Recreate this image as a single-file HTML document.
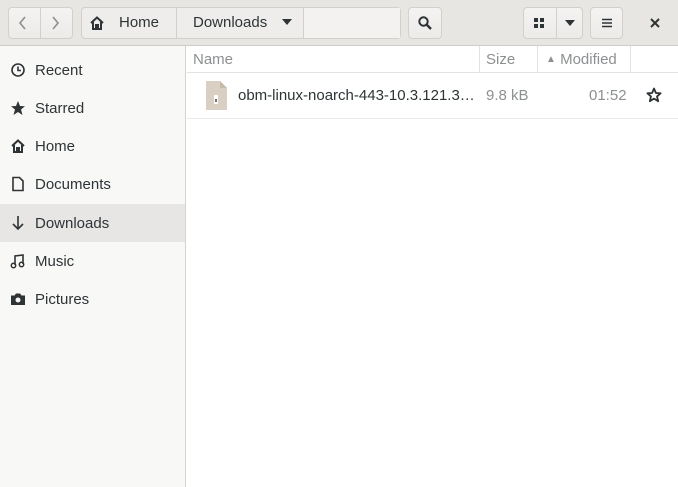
<!DOCTYPE html><html><head><style>
*{box-sizing:border-box;margin:0;padding:0}
body{width:678px;height:487px;overflow:hidden;font-family:"Liberation Sans","DejaVu Sans",sans-serif;font-size:15px;color:#2e3436;background:#fff;position:relative}
.hb{position:absolute;left:0;top:0;width:678px;height:46px;background:#e8e6e3;border-bottom:1px solid #cfcbc6}
.btn{position:absolute;top:7px;height:32px;background:linear-gradient(#f4f3f2,#ecebe9);border:1px solid #d3cfca;border-radius:4px;display:flex;align-items:center;justify-content:center;color:#2e3436}
.side{position:absolute;left:0;top:46px;width:186px;height:441px;background:#f8f8f7;border-right:1px solid #d6d3cf}
.it{position:absolute;left:0;width:185px;height:38px;display:flex;align-items:center;padding-left:10px}
.it svg{width:16px;height:16px;margin-right:9px}
.sel{background:#e7e6e5}
.t{position:absolute;white-space:nowrap}
</style></head><body>
<div class="hb"></div>
<div class="btn" style="left:8px;width:65px;border-radius:4px"></div>
<div class="t" style="left:40px;top:8px;width:1px;height:30px;background:#d3cfca"></div>
<svg class="t" style="left:16px;top:15px" width="14" height="16"><path d="M9 2 L4 8 L9 14" stroke="#8a8f91" stroke-width="1.6" fill="none"/></svg>
<svg class="t" style="left:49px;top:15px" width="14" height="16"><path d="M4 2 L9 8 L4 14" stroke="#8a8f91" stroke-width="1.6" fill="none"/></svg>
<div class="btn" style="left:81px;width:320px;background:#eeedeb"></div>
<div class="t" style="left:176px;top:8px;width:1px;height:30px;background:#d3cfca"></div>
<div class="t" style="left:303px;top:8px;width:97px;height:30px;background:#f3f2f1;border-left:1px solid #d3cfca"></div>
<svg class="t" style="left:89px;top:15px" width="16" height="16"><path d="M2 8 L8 2.5 L14 8 M4 7 V14 H12 V7 M7 14 V10 H9 V14" stroke="#2e3436" stroke-width="2" fill="none"/></svg>
<div class="t" style="left:119px;top:14px">Home</div>
<div class="t" style="left:193px;top:14px">Downloads</div>
<svg class="t" style="left:281px;top:18px" width="12" height="8"><path d="M1 1 H11 L6 7Z" fill="#2e3436"/></svg>
<div class="btn" style="left:408px;width:34px"><svg width="16" height="16"><circle cx="6.5" cy="6.5" r="4.2" stroke="#2e3436" stroke-width="2" fill="none"/><path d="M9.5 9.5 L14 14" stroke="#2e3436" stroke-width="2.4"/></svg></div>
<div class="btn" style="left:523px;width:60px"></div>
<div class="t" style="left:556px;top:8px;width:1px;height:30px;background:#d3cfca"></div>
<svg class="t" style="left:534px;top:18px" width="10" height="10"><rect x="0" y="0" width="4" height="4" fill="#2e3436"/><rect x="6" y="0" width="4" height="4" fill="#2e3436"/><rect x="0" y="6" width="4" height="4" fill="#2e3436"/><rect x="6" y="6" width="4" height="4" fill="#2e3436"/></svg>
<svg class="t" style="left:564px;top:19px" width="12" height="8"><path d="M1 1 H11 L6 7Z" fill="#2e3436"/></svg>
<div class="btn" style="left:590px;width:33px"><svg width="12" height="12"><path d="M1 2.5H11M1 6H11M1 9.5H11" stroke="#2e3436" stroke-width="1.6"/></svg></div>
<svg class="t" style="left:650px;top:18px" width="10" height="10"><path d="M1 1L9 9M9 1L1 9" stroke="#2e3436" stroke-width="2"/></svg>
<div class="side">
<div class="it" style="top:5px"><svg viewBox="0 0 16 16"><circle cx="8" cy="8" r="6" stroke="#2e3436" stroke-width="1.6" fill="none"/><path d="M8 4.5V8.5H11" stroke="#2e3436" stroke-width="1.6" fill="none"/></svg>Recent</div>
<div class="it" style="top:43px"><svg viewBox="0 0 16 16"><path d="M8 1 L10 6 L15 6.2 L11 9.5 L12.5 15 L8 12 L3.5 15 L5 9.5 L1 6.2 L6 6Z" fill="#2e3436"/></svg>Starred</div>
<div class="it" style="top:81px"><svg viewBox="0 0 16 16"><path d="M2 8 L8 2.5 L14 8 M4 7 V14 H12 V7 M7 14 V10 H9 V14" stroke="#2e3436" stroke-width="2" fill="none"/></svg>Home</div>
<div class="it" style="top:119px"><svg viewBox="0 0 16 16"><path d="M3 1.5H9.5L13 5V14.5H3Z" stroke="#2e3436" stroke-width="1.6" fill="none"/></svg>Documents</div>
<div class="it sel" style="top:158px"><svg viewBox="0 0 16 16"><path d="M8 1V14M3 9L8 14L13 9" stroke="#2e3436" stroke-width="1.6" fill="none"/></svg>Downloads</div>
<div class="it" style="top:196px"><svg viewBox="0 0 16 16"><path d="M5 12V3L13 2V11" stroke="#2e3436" stroke-width="1.6" fill="none"/><circle cx="3.5" cy="12.5" r="2.2" stroke="#2e3436" stroke-width="1.5" fill="none"/><circle cx="11.5" cy="11.5" r="2.2" stroke="#2e3436" stroke-width="1.5" fill="none"/></svg>Music</div>
<div class="it" style="top:234px"><svg viewBox="0 0 16 16"><path d="M1 4.5H4.5L6 2.5H10L11.5 4.5H15V14H1Z" fill="#2e3436"/><circle cx="8" cy="9" r="2.5" fill="#f6f5f4"/></svg>Pictures</div>
</div>
<div class="t" style="left:187px;top:46px;width:491px;height:27px;border-bottom:1px solid #e4e2df"></div>
<div class="t" style="left:479px;top:46px;width:1px;height:26px;background:#e4e2df"></div>
<div class="t" style="left:537px;top:46px;width:1px;height:26px;background:#e4e2df"></div>
<div class="t" style="left:630px;top:46px;width:1px;height:26px;background:#e4e2df"></div>
<div class="t" style="left:193px;top:51px;color:#8d9091">Name</div>
<div class="t" style="left:486px;top:51px;color:#8d9091">Size</div>
<div class="t" style="left:546px;top:51px;color:#8d9091"><span style="font-size:10px;position:relative;top:-2px">▲</span> Modified</div>
<div class="t" style="left:187px;top:118px;width:491px;height:1px;background:#eceae8"></div>
<svg class="t" style="left:204px;top:80px" width="24" height="31"><path d="M2 1H16L23 8V30H2Z" fill="#d9cfc3"/><path d="M16 1V8H23" fill="#c6baab"/><rect x="10" y="15" width="4" height="9" fill="#fff"/><rect x="11" y="19" width="2" height="3" fill="#7a6f63"/></svg>
<div class="t" style="left:238px;top:87px">obm-linux-noarch-443-10.3.121.3…</div>
<div class="t" style="left:486px;top:87px;color:#8d9091">9.8 kB</div>
<div class="t" style="left:589px;top:87px;color:#8d9091">01:52</div>
<svg class="t" style="left:646px;top:87px" width="16" height="16"><path d="M8 1.5 L9.9 6 L14.6 6.3 L11 9.4 L12.2 14.2 L8 11.6 L3.8 14.2 L5 9.4 L1.4 6.3 L6.1 6Z" stroke="#2e3436" stroke-width="1.8" fill="none" stroke-linejoin="round"/></svg>
</body></html>
